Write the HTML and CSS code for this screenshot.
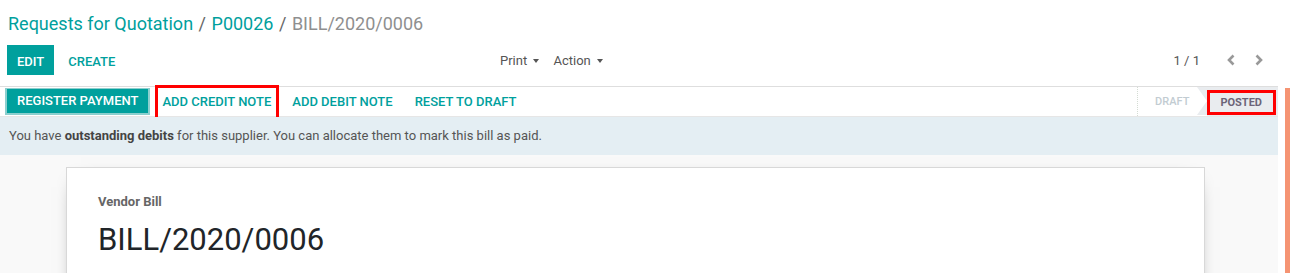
FILE: index.html
```html
<!DOCTYPE html>
<html lang="en">
<head>
    <meta charset="UTF-8">
    <title>BILL/2020/0006 - Odoo</title>
    <link rel="stylesheet" href="styles.css">
</head>
<body>
    <div class="page">
        <div class="main">
            <!-- Control panel -->
            <div class="control-panel">
                <ol class="breadcrumb">
                    <li><a href="#">Requests for Quotation</a></li>
                    <li class="sep">/</li>
                    <li><a href="#">P00026</a></li>
                    <li class="sep">/</li>
                    <li class="active">BILL/2020/0006</li>
                </ol>
                <div class="cp-row">
                    <div class="cp-buttons">
                        <button class="btn btn-primary">Edit</button>
                        <button class="btn btn-link">Create</button>
                    </div>
                    <div class="cp-sidebar">
                        <span class="dropdown">Print <span class="caret"></span></span>
                        <span class="dropdown">Action <span class="caret"></span></span>
                    </div>
                    <div class="cp-pager">
                        <span class="pager-value">1 / 1</span>
                        <svg class="pager-arrow" width="10" height="12" viewBox="0 0 10 12"><path d="M7.5 1.5 L3 6 L7.5 10.5" fill="none" stroke="#999" stroke-width="2.6"/></svg>
                        <svg class="pager-arrow" width="10" height="12" viewBox="0 0 10 12"><path d="M2.5 1.5 L7 6 L2.5 10.5" fill="none" stroke="#999" stroke-width="2.6"/></svg>
                    </div>
                </div>
            </div>

            <!-- Status bar -->
            <div class="statusbar">
                <div class="status-buttons">
                    <button class="btn btn-primary btn-outlined">Register Payment</button>
                    <button class="btn btn-link highlight">Add Credit Note</button>
                    <button class="btn btn-link">Add Debit Note</button>
                    <button class="btn btn-link">Reset to Draft</button>
                </div>
                <div class="status-steps">
                    <span class="step">Draft</span>
                    <span class="step current"><span class="highlight">Posted</span></span>
                </div>
            </div>

            <div class="alert">
                You have <b>outstanding debits</b> for this supplier. You can allocate them to mark this bill as paid.
            </div>

            <!-- Form sheet -->
            <div class="sheet-bg">
                <div class="sheet">
                    <div class="doc-label">Vendor Bill</div>
                    <h1 class="doc-name">BILL/2020/0006</h1>
                </div>
            </div>
        </div>
        <div class="side-strip"></div>
    </div>
</body>
</html>
```

FILE: styles.css
```css
body {
    margin: 0;
    font-family: 'Roboto', 'Liberation Sans', sans-serif;
    font-size: 13px;
    color: #4c4c4c;
    background: white;
    overflow: hidden;
}

.page {
    display: flex;
    height: 273px;
    overflow: hidden;
}

.main {
    flex: 1;
    display: flex;
    flex-direction: column;
    min-height: 0;
}

.side-strip {
    width: 5px;
    margin-left: 7px;
    margin-top: 88px;
    background: #f59473;
}

/* Control panel */
.control-panel {
    padding: 12px 0 0 7px;
}

.breadcrumb {
    display: flex;
    gap: 5.5px;
    list-style: none;
    margin: 0 0 0 1px;
    padding: 0;
    font-size: 18px;
    line-height: 24px;
}

.breadcrumb a {
    color: #00a09d;
    text-decoration: none;
}

.breadcrumb .sep {
    color: #666;
}

.breadcrumb .active {
    color: #8f8f8f;
}

.cp-row {
    display: flex;
    align-items: center;
    margin-top: 9px;
    height: 30px;
}

.cp-buttons {
    display: flex;
    width: 480px;
}

.btn {
    font-family: inherit;
    font-size: 13px;
    font-weight: 500;
    text-transform: uppercase;
    border: none;
    background: none;
    cursor: pointer;
    padding: 0 10px;
    height: 30px;
    line-height: 30px;
}

.btn-primary {
    background: #00a09d;
    color: white;
}

.cp-buttons .btn {
    padding-top: 2px;
}

.btn-link {
    color: #00a09d;
    padding: 0 14px;
}

.cp-sidebar {
    display: flex;
    gap: 14px;
    margin-left: 13px;
    flex: 1;
}

.dropdown {
    color: #555;
    font-size: 13px;
}

.caret {
    display: inline-block;
    border-top: 4px solid #555;
    border-left: 3.5px solid transparent;
    border-right: 3.5px solid transparent;
    vertical-align: middle;
    margin-left: 3px;
}

.cp-pager {
    display: flex;
    align-items: center;
    margin-right: 14px;
}

.pager-value {
    color: #555;
    margin-right: 26px;
}

.pager-arrow {
    margin-left: 18px;
}

.pager-arrow:first-of-type {
    margin-left: 0;
}

/* Status bar */
.statusbar {
    display: flex;
    justify-content: space-between;
    margin-top: 11px;
    height: 29px;
    border-top: 1px solid #dedede;
    border-bottom: 1px solid #e6e6e6;
}

.status-buttons {
    display: flex;
    align-items: center;
    padding-left: 5px;
}

.btn-outlined {
    height: 27px;
    line-height: 24px;
    padding: 0 10px;
    border: 2px solid #8ccfce;
    border-top: 1px solid #8ccfce;
    margin-right: 7px;
}

.status-buttons .btn-link {
    padding: 0 11px;
    height: 29px;
    line-height: 26px;
}

.highlight {
    outline: 3px solid #f00;
    outline-offset: -2px;
}

.status-buttons .highlight {
    outline-offset: -1px;
    padding: 0 6px 0 5px;
    margin-right: 4px;
    height: 31px;
    margin-top: 1px;
}

.status-steps {
    display: flex;
    align-items: stretch;
}

.step {
    display: flex;
    align-items: center;
    font-size: 11px;
    font-weight: 500;
    text-transform: uppercase;
    color: #c2ccd2;
    padding: 0 18px 0 17px;
    border-left: 1px dotted #d4dcd4;
}

.step.current {
    background: #e9ecef;
    color: #6c6478;
    border-left: none;
    padding: 0;
    position: relative;
}

.step.current::before {
    content: "";
    position: absolute;
    left: -10px;
    top: 0;
    border-top: 14.5px solid #e9ecef;
    border-bottom: 14.5px solid #e9ecef;
    border-left: 10px solid transparent;
}

.step.current .highlight {
    display: flex;
    align-items: center;
    height: 25px;
    margin-top: 1px;
    padding: 0 14px 0 13px;
    margin-right: 2px;
    outline-offset: -3px;
    font-weight: 700;
}

.alert {
    background: #e4eef3;
    color: #555;
    padding: 0 9px;
    height: 38px;
    line-height: 38px;
}

.alert b {
    color: #444;
}

/* Sheet */
.sheet-bg {
    flex: 1;
    min-height: 0;
    overflow: hidden;
    background: #f9f9f9;
    padding: 12px 0 0 66px;
}

.sheet {
    width: 1106px;
    height: 140px;
    background: white;
    border: 1px solid #d8d8d8;
    box-shadow: 0 5px 20px -15px black;
    padding: 26px 0 0 31px;
}

.doc-label {
    font-weight: 700;
    font-size: 13px;
    color: #666;
}

.doc-name {
    margin: 13px 0 0;
    font-weight: 400;
    font-size: 31px;
    line-height: 36px;
    color: #212529;
}
```
